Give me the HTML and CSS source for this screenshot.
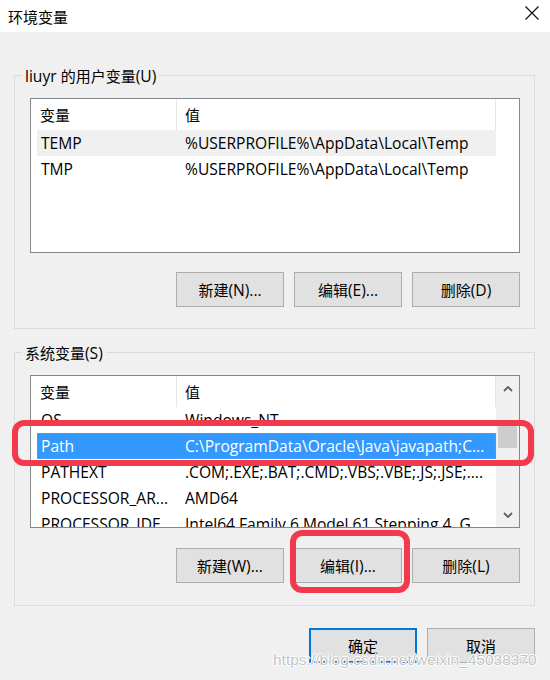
FILE: index.html
```html
<!DOCTYPE html>
<html lang="zh-CN">
<head>
<meta charset="utf-8">
<title>环境变量</title>
<link rel="stylesheet" href="styles.css">
</head>
<body>
<div class="window">
  <header class="titlebar">
    <span class="title zh">环境变量</span>
    <svg class="close" width="14" height="14" viewBox="0 0 14 14" aria-label="关闭">
      <path d="M0.5 0.5 L13.5 13.5 M13.5 0.5 L0.5 13.5" stroke="#111" stroke-width="1.2" fill="none"/>
    </svg>
  </header>

  <main class="content">
    <section class="group">
      <div class="legend">liuyr <span class="zh">的用户变量</span>(U)</div>
      <div class="list list-user">
        <div class="list-main">
          <div class="list-head">
            <div class="hcell h1"><span class="zh">变量</span></div>
            <div class="hcell h2"><span class="zh">值</span></div>
          </div>
          <div class="row inactive"><span class="cell1">TEMP</span><span class="cell2">%USERPROFILE%\AppData\Local\Temp</span></div>
          <div class="row"><span class="cell1">TMP</span><span class="cell2">%USERPROFILE%\AppData\Local\Temp</span></div>
        </div>
      </div>
      <div class="btns">
        <button class="btn"><span class="zh">新建</span>(N)...</button>
        <button class="btn"><span class="zh">编辑</span>(E)...</button>
        <button class="btn"><span class="zh">删除</span>(D)</button>
      </div>
    </section>

    <section class="group group-sys">
      <div class="legend"><span class="zh">系统变量</span>(S)</div>
      <div class="list list-sys">
        <div class="list-main">
          <div class="list-head">
            <div class="hcell h1"><span class="zh">变量</span></div>
            <div class="hcell h2"><span class="zh">值</span></div>
          </div>
          <div class="row"><span class="cell1">OS</span><span class="cell2">Windows_NT</span></div>
          <div class="row selected"><span class="cell1">Path</span><span class="cell2">C:\ProgramData\Oracle\Java\javapath;C...</span></div>
          <div class="row"><span class="cell1">PATHEXT</span><span class="cell2">.COM;.EXE;.BAT;.CMD;.VBS;.VBE;.JS;.JSE;....</span></div>
          <div class="row"><span class="cell1">PROCESSOR_AR...</span><span class="cell2">AMD64</span></div>
          <div class="row"><span class="cell1">PROCESSOR_IDE...</span><span class="cell2">Intel64 Family 6 Model 61 Stepping 4, G</span></div>
        </div>
        <div class="scrollbar">
          <div class="sb-btn">
            <svg width="10" height="6" viewBox="0 0 10 6"><path d="M1 5 L5 1 L9 5" stroke="#606060" stroke-width="1.8" fill="none"/></svg>
          </div>
          <div class="sb-track"><div class="thumb"></div></div>
          <div class="sb-btn">
            <svg width="10" height="6" viewBox="0 0 10 6"><path d="M1 1 L5 5 L9 1" stroke="#606060" stroke-width="1.8" fill="none"/></svg>
          </div>
        </div>
      </div>
      <div class="btns">
        <button class="btn"><span class="zh">新建</span>(W)...</button>
        <button class="btn"><span class="zh">编辑</span>(I)...</button>
        <button class="btn"><span class="zh">删除</span>(L)</button>
      </div>
    </section>

    <div class="dialog-btns">
      <button class="btn default"><span class="zh">确定</span></button>
      <button class="btn"><span class="zh">取消</span></button>
    </div>
  </main>

  <div class="mark mark-path"></div>
  <div class="mark mark-edit"></div>
  <div class="watermark">https://blog.csdn.net/weixin_45038370</div>
</div>
</body>
</html>
```

FILE: styles.css
```css
* {
  box-sizing: border-box;
}

body {
  margin: 0;
  background: #f0f0f0;
  font-family: "Open Sans", "Noto Sans CJK SC", sans-serif;
  font-size: 15.6px;
  color: #000;
}

.zh {
  font-family: "Noto Sans CJK SC", sans-serif;
  font-size: 15px;
}

.window {
  position: relative;
  width: 550px;
  height: 680px;
  overflow: hidden;
}

/* title bar */
.titlebar {
  height: 32px;
  background: #fff;
  display: flex;
  align-items: center;
  justify-content: space-between;
  padding: 0 11px 0 8px;
}

.title {
  line-height: 1;
}

.close {
  display: block;
  margin-top: -6px;
}

/* main area */
.content {
  padding: 43px 15px 0 14px;
}

.group {
  border: 1px solid #dcdcdc;
  padding: 0 14px 21px 15px;
}

.group-sys {
  margin-top: 23px;
  padding-bottom: 22px;
}

.legend {
  width: fit-content;
  height: 22px;
  line-height: 22px;
  margin: -11px 0 0 -8px;
  padding: 0 3px;
  background: #f0f0f0;
  white-space: nowrap;
}

/* list view */
.list {
  margin-top: 11px;
  height: 155px;
  border: 1px solid #828790;
  background: #fff;
  display: flex;
}

.list-sys {
  height: 153px;
}

.list-main {
  width: 465px;
  overflow: hidden;
}

.list-head {
  display: flex;
  height: 31px;
}

.hcell {
  line-height: 31px;
  border-right: 1px solid #e5e5e5;
}

.h1 {
  width: 146px;
  padding-left: 9px;
}

.h2 {
  flex: 1;
  padding-left: 8px;
}

.row {
  display: flex;
  height: 26px;
  line-height: 26px;
  margin-left: 6px;
  white-space: nowrap;
}

.cell1 {
  width: 148px;
  flex: none;
  padding-left: 4px;
  overflow: hidden;
}

.cell2 {
  flex: 1;
  overflow: hidden;
}

.row.inactive {
  background: #f0f0f0;
}

.row.selected {
  background: #3399ff;
  color: #fff;
  outline: 1px dotted #c9853a;
  outline-offset: -1px;
}

/* scrollbar */
.scrollbar {
  width: 23px;
  background: #f0f0f0;
  display: flex;
  flex-direction: column;
}

.sb-btn {
  height: 25px;
  display: flex;
  align-items: center;
  justify-content: center;
}

.sb-btn svg {
  display: block;
}

.sb-track {
  flex: 1;
  padding-top: 23px;
}

.thumb {
  height: 24px;
  margin: 0 2px;
  background: #cdcdcd;
}

/* buttons */
.btns {
  display: flex;
  justify-content: flex-end;
  gap: 10px;
  margin-top: 19px;
}

.group-sys .btns {
  margin-top: 20px;
}

.btn {
  width: 108px;
  height: 35px;
  border: 1px solid #adadad;
  background: #e1e1e1;
  font-family: inherit;
  font-size: 15.6px;
  color: #000;
  padding: 0;
  display: flex;
  align-items: center;
  justify-content: center;
  white-space: nowrap;
}

.btn.default {
  border: 2px solid #0078d7;
}

.dialog-btns {
  display: flex;
  justify-content: flex-end;
  gap: 10px;
  margin-top: 22px;
}

/* annotation marks drawn over the dialog */
.mark {
  position: absolute;
  border: 6px solid #f23a4c;
  border-radius: 12px;
}

.mark-path {
  left: 12px;
  top: 420px;
  width: 522px;
  height: 46px;
}

.mark-edit {
  left: 290px;
  top: 530px;
  width: 120px;
  height: 63px;
}

.watermark {
  position: absolute;
  left: 273px;
  top: 651px;
  font-family: "Liberation Sans", sans-serif;
  font-size: 15.5px;
  color: rgba(185, 185, 185, 0.85);
  text-shadow: 1px 0 0 #fff, -1px 0 0 #fff, 0 1px 0 #fff, 0 -1px 0 #fff;
  white-space: nowrap;
}
```
